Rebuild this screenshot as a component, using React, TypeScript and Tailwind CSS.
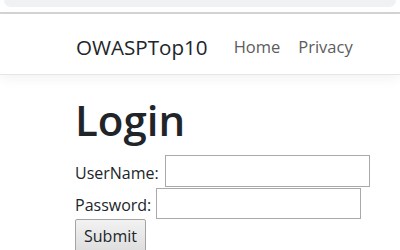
export default function App() {
  return (
    <div className="w-[400px] h-[250px] overflow-hidden bg-white font-['Open_Sans',sans-serif] text-[#212529]">
      {/* browser chrome bottom edge */}
      <div className="h-[14px] border-b-2 border-[#d4d4d4] px-[4px]">
        <div className="h-[7px] rounded-b-[7px] bg-[#eff1f3]" />
      </div>

      <nav className="h-[61px] border-b border-[#e3e6ea] shadow-[0_4px_12px_rgba(0,0,0,0.05)] flex items-center pl-[76px] pt-[6px]">
        <span className="text-[20.6px] leading-none text-[#212529] mr-[26px]">OWASPTop10</span>
        <a className="text-[16.5px] leading-none text-[#5c5c5c] mr-[18px]">Home</a>
        <a className="text-[16.5px] leading-none text-[#5c5c5c]">Privacy</a>
      </nav>

      <main className="pl-[75px] pt-[18px]">
        <h1 className="text-[42px] leading-[53px] font-semibold mb-[9px]">Login</h1>
        <form className="text-[16px]">
          <div className="flex items-center h-[32px]">
            <label className="pt-[3px]">UserName:</label>
            <input className="ml-[6px] w-[205px] h-[32px] border border-[#a9a9a9] bg-white" />
          </div>
          <div className="flex items-center h-[32px]">
            <label className="pt-[3px]">Password:</label>
            <input type="password" className="ml-[5px] w-[205px] h-[31px] border border-[#a9a9a9] bg-white" />
          </div>
          <button type="button" className="h-[34px] px-[8px] border border-[#a3a3a3] rounded-[2px] bg-gradient-to-b from-[#f2f2f2] to-[#dddddd] text-[#212529]">
            Submit
          </button>
        </form>
      </main>
    </div>
  );
}
